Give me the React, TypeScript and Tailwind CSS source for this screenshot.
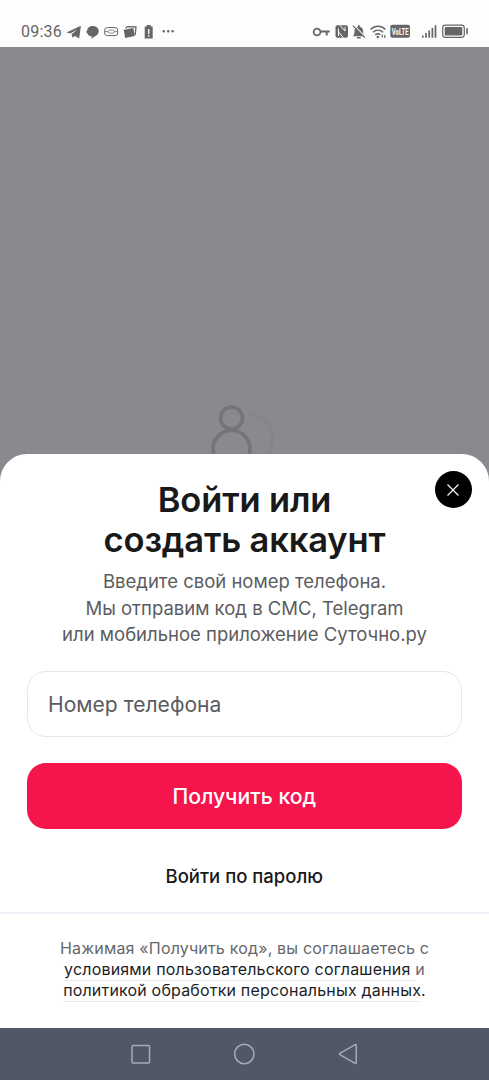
import React from 'react';

const NOTICE_LINK = 'text-[#1c1d1f] border-b border-[#e9ebf2] pb-px';

function StatusBar() {
  return (
    <header className="h-[47px] shrink-0 bg-[#fdfdfd] pt-[15px] pl-[21px] flex items-center text-[#666668]">
      <span className="w-[41px] pt-px font-['Roboto',sans-serif] text-[16px] leading-none tracking-[0.2px] whitespace-nowrap">
        09:36
      </span>
      <svg width="118" height="18" viewBox="62 22 118 18" className="shrink-0" fill="currentColor">
        {/* telegram */}
        <path d="M66.500 32.400 80.900 25.800 79.200 38.400 75 36 72.400 37.600 71.600 34.200 77.500 29.300 70.300 33.500Z" />
        {/* chat */}
        <path d="M92.700 26c3.600 0 6 2.200 6 5.200 0 2.800-1.800 4.200-3.700 5L91.500 38.800l.2-2.600c-2.800-.2-4.200-1.400-4.300-3l-1.300-1.200 1-1.400C87.300 27.800 89.500 26 92.700 26Z" />
        {/* game pad */}
        <rect x="104.700" y="27.600" width="13" height="8" rx="2.500" fill="none" stroke="currentColor" strokeWidth="1" />
        <path d="M105 31.600h3M114.500 31.600h3" stroke="currentColor" strokeWidth=".8" />
        <rect x="108" y="30.100" width="6.400" height="3" rx="1.500" fill="none" stroke="currentColor" strokeWidth=".7" />
        {/* cards */}
        <path d="m123.800 29.800 9.600-1.800 1.500 7.900-9.800 2Z" />
        <path d="m125.600 28.300 2-1.700 8.400.3-.8 8" fill="none" stroke="currentColor" strokeWidth="1.300" />
        {/* battery alert */}
        <path d="M146.700 25h4v1.600h2v11.900h-8V26.600h2Z" />
        <path d="M148.700 29.200v4.700M148.700 35.200v1.500" stroke="#fff" strokeWidth="1.400" />
        <circle cx="163.800" cy="31.300" r="1.200" />
        <circle cx="168.200" cy="31.300" r="1.200" />
        <circle cx="172.600" cy="31.300" r="1.200" />
      </svg>
      <svg width="160" height="18" viewBox="310 22 160 18" className="ml-[130px] shrink-0" fill="none" stroke="currentColor">
        {/* vpn key */}
        <circle cx="317" cy="32" r="3.400" strokeWidth="1.800" />
        <path d="M320.300 31.500h9.400M326.700 31.500v4" strokeWidth="1.900" />
        {/* nfc */}
        <rect x="335.500" y="25.300" width="12.500" height="12.500" rx="2" fill="currentColor" stroke="none" />
        <path d="M338.500 36V28.500M340 25.300l5 5.700V27.300M338.500 32l5 5.800" stroke="#fdfdfd" strokeWidth="1" />
        {/* muted bell */}
        <path d="M352.800 36.200c1.600-1.300 1.600-2.700 1.600-4.700 0-2.700 1.700-4.800 4.400-5 2.700.2 4.400 2.300 4.400 5 0 2 0 3.400 1.600 4.700Z" fill="currentColor" stroke="none" />
        <path d="M358.800 24.900v2M356.900 37.700h3.800" strokeWidth="1.600" />
        <path d="m354 25.300 11.500 11.700" stroke="#fdfdfd" strokeWidth="1.200" />
        <path d="m352.900 25.600 11.900 12" strokeWidth="1.200" />
        {/* wifi */}
        <path d="M370.600 29.500c4.200-4.200 10.600-4.200 14.800 0M373 32.300c3-2.800 7-2.800 10 0M375.300 34.800c1.600-1.300 3.500-1.300 5 0" strokeWidth="1.500" />
        <circle cx="377.800" cy="37" r="1.300" fill="currentColor" stroke="none" />
        <path d="M382.300 34.500v3M384.800 35v3" strokeWidth="1.200" />
        {/* volte */}
        <rect x="390.300" y="24.700" width="19.700" height="13" rx="2" fill="currentColor" stroke="none" />
        <text x="400.200" y="34.500" textAnchor="middle" fill="#fdfdfd" stroke="none" fontFamily="Roboto, sans-serif" fontWeight="700" fontSize="9" textLength="17" lengthAdjust="spacingAndGlyphs">
          VoLTE
        </text>
        {/* signal */}
        <path d="M422.800 35.500v2.300M426 33v4.800M429.200 30.500v7.300M432.400 28v9.800M435.500 25.300v12.500" strokeWidth="1.700" />
        {/* battery */}
        <rect x="442.700" y="25.100" width="21.600" height="12.300" rx="2.800" strokeWidth="1.200" />
        <rect x="444.700" y="27.100" width="17.600" height="8.300" rx="1.200" fill="currentColor" stroke="none" />
        <path d="M467 28.800v5" strokeWidth="1.600" strokeLinecap="round" />
      </svg>
    </header>
  );
}

function ProfilePlaceholder() {
  return (
    <div className="h-[407px] shrink-0 flex flex-col justify-end items-center">
      <svg width="75" height="57" viewBox="207 397 75 57" fill="none">
        <path d="M249 413.500A26 26 0 0 1 268 454" stroke="#85858b" strokeWidth="3.500" />
        <circle cx="231.500" cy="418" r="11" stroke="#74747b" strokeWidth="3.700" />
        <circle cx="231.500" cy="449" r="18.500" stroke="#74747b" strokeWidth="3.700" />
      </svg>
    </div>
  );
}

function LoginSheet() {
  return (
    <section className="relative flex-1 rounded-t-[27px] bg-white flex flex-col text-center">
      <button
        type="button"
        aria-label="Закрыть"
        className="absolute top-[17px] right-[17.5px] w-[37px] h-[37px] rounded-full bg-black flex items-center justify-center"
      >
        <svg width="12" height="12" viewBox="0 0 12 12" stroke="#fff" strokeWidth="1.100">
          <path d="m.5.5 11 11M11.500.5l-11 11" />
        </svg>
      </button>

      <h1 className="mt-[26px] text-[34.5px] leading-[40px] font-semibold tracking-[-0.15px] text-[#19191a]">
        Войти или
        <br />
        создать аккаунт
      </h1>
      <p className="mt-[8px] text-[18.5px] leading-[26.5px] text-[#5b5c60]">
        Введите свой номер телефона.
        <br />
        Мы отправим код в СМС, Telegram
        <br />
        или мобильное приложение Суточно.ру
      </p>

      <div className="pl-[26.5px] pr-[27px] mt-[23px] flex flex-col">
        <input
          type="tel"
          placeholder="Номер телефона"
          className="h-[66px] rounded-[19px] border border-[#e8e8ea] bg-white pt-px px-[20.5px] text-[21.1px] placeholder:text-[#5b5c60] placeholder:opacity-100 outline-none"
        />
        <button type="button" className="mt-[26.5px] h-[66px] rounded-[19px] bg-[#f5144b] pt-px text-white text-[21.2px] font-medium">
          Получить код
        </button>
        <button type="button" className="mt-[30.5px] h-[33px] pt-px text-[18.5px] font-medium text-[#19191a]">
          Войти по паролю
        </button>
      </div>

      <p className="mt-[19px] border-t-2 border-[#efeff8] pt-[24px] text-[16px] leading-[21.3px] tracking-[0.18px] text-[#66676a]">
        Нажимая «Получить код», вы соглашаетесь с
        <br />
        <a className={NOTICE_LINK}>условиями пользовательского соглашения </a>и
        <br />
        <a className={NOTICE_LINK}>политикой обработки персональных данных</a>
        <span className="text-[#1c1d1f]">.</span>
      </p>
    </section>
  );
}

function NavigationBar() {
  return (
    <nav className="h-[52px] shrink-0 bg-[#505866] flex items-center justify-center">
      <svg width="230" height="26" viewBox="130 1041 230 26" fill="none" stroke="#a7abb4" strokeWidth="1.500">
        <rect x="132" y="1045.500" width="17.500" height="17.500" rx="1" />
        <circle cx="244.300" cy="1054" r="9.700" />
        <path d="M340.200 1053.200 355.200 1044.700q1-.5 1 .8v17q0 1.300-1 .8L340.200 1054.800q-1.200-.8 0-1.600Z" />
      </svg>
    </nav>
  );
}

export default function App() {
  return (
    <div className="w-[489px] h-[1080px] overflow-hidden flex flex-col font-['Inter',sans-serif]">
      <StatusBar />
      <main className="flex-1 min-h-0 bg-[#89898e] flex flex-col">
        <ProfilePlaceholder />
        <LoginSheet />
      </main>
      <NavigationBar />
    </div>
  );
}
